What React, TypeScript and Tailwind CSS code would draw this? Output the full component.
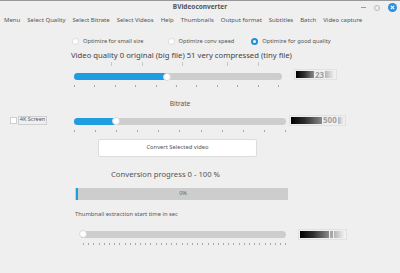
import React from "react";

const font = { fontFamily: '"Noto Sans", "DejaVu Sans", sans-serif' };

function Track({ width, fill, ticks, tickGap, tickStart = 0 }: { width: number; fill: number; ticks: number; tickGap: number; tickStart?: number }) {
  return (
    <div className="flex flex-col" style={{ width }}>
      <div className="relative h-[7px] rounded-full bg-[#cdcdcd]">
        <div className="h-full rounded-full bg-[#1f9de0]" style={{ width: fill }} />
        <div
          className="absolute top-1/2 h-[8px] w-[8px] -translate-y-1/2 -translate-x-1/2 rounded-full border border-[#d8d8d8] bg-white"
          style={{ left: fill }}
        />
      </div>
      <div className="mt-[5px] flex h-[3px]" style={{ paddingLeft: tickStart }}>
        {Array.from({ length: ticks }).map((_, i) => (
          <div key={i} className="h-[2px] w-[1px] shrink-0 bg-[#a8a8a8]" style={{ marginRight: i === ticks - 1 ? 0 : tickGap - 1 }} />
        ))}
      </div>
    </div>
  );
}

function ValueBox({ width, split, children }: { width: number; split: number; children?: React.ReactNode }) {
  return (
    <div className="flex h-[11px] items-center border border-[#e2e2e2] p-[1px]" style={{ width }}>
      <div
        className="h-full"
        style={{ width: split, background: "linear-gradient(to right, #000 0%, #2e2e2e 45%, #8a8a8a 100%)" }}
      />
      {children}
      <div className="h-full flex-1" style={{ background: "linear-gradient(to right, #b4b4b4 0%, #f4f4f4 100%)" }} />
    </div>
  );
}

function Radio({ checked, label }: { checked?: boolean; label: string }) {
  return (
    <div className="flex items-center gap-[4px]">
      {checked ? (
        <div className="flex h-[7px] w-[7px] items-center justify-center rounded-full bg-[#1e8fd8]">
          <div className="h-[3px] w-[3px] rounded-full bg-white" />
        </div>
      ) : (
        <div className="h-[7px] w-[7px] rounded-full border border-[#dcdcdc] bg-white" />
      )}
      <span className="whitespace-nowrap text-[5.7px] leading-none text-[#555]">{label}</span>
    </div>
  );
}

export default function App() {
  const menus = ["Menu", "Select Quality", "Select Bitrate", "Select Videos", "Help", "Thumbnails", "Output format", "Subtitles", "Batch", "Video capture"];
  return (
    <div className="flex h-[273px] w-[400px] flex-col overflow-hidden bg-[#efefef] text-[#444]" style={font}>
      {/* title bar */}
      <div className="grid h-[14px] grid-cols-[1fr_auto_1fr] items-center border-t border-[#9a9a9a]">
        <div />
        <div className="text-[6.5px] font-bold leading-none text-[#555]">BVideoconverter</div>
        <div className="flex items-center justify-end gap-[8px] pr-[3px]">
          <div className="h-[1px] w-[5px] bg-[#9a9a9a]" />
          <div className="h-[6px] w-[6px] rounded-full border border-[#b8b8b8]" />
          <div className="flex h-[9px] w-[9px] items-center justify-center rounded-full bg-[#2d8fe0]">
            <svg width="5" height="5" viewBox="0 0 5 5">
              <path d="M0.8 0.8 L4.2 4.2 M4.2 0.8 L0.8 4.2" stroke="white" strokeWidth="1.1" />
            </svg>
          </div>
        </div>
      </div>
      {/* menu bar */}
      <div className="flex h-[12px] items-center gap-[7px] pl-[4px] text-[6px] leading-none text-[#555]">
        {menus.map((m) => (
          <span key={m} className="whitespace-nowrap">{m}</span>
        ))}
      </div>
      {/* radios */}
      <div className="mt-[12px] flex h-[7px] items-center pl-[72px]">
        <Radio label="Optimize for small size" />
        <div className="ml-[24px]"><Radio label="Optimize conv speed" /></div>
        <div className="ml-[17px]"><Radio checked label="Optimize for good quality" /></div>
      </div>
      <div className="mt-[5px] whitespace-nowrap pl-[71px] text-[7.7px] leading-[11px] text-[#444]">
        Video quality 0 original (big file) 51 very compressed (tiny file)
      </div>
      {/* stray ticks */}
      <div className="mt-[1px] flex h-[4px] pl-[111px]">
        <div className="h-[4px] w-[1px] bg-[#c8c8c8]" />
        <div className="ml-[30px] h-[4px] w-[1px] bg-[#c8c8c8]" />
        <div className="ml-[39px] h-[4px] w-[1px] bg-[#c8c8c8]" />
        <div className="ml-[44px] h-[4px] w-[1px] bg-[#c8c8c8]" />
        <div className="ml-[30px] h-[4px] w-[1px] bg-[#c8c8c8]" />
      </div>
      {/* slider 1 */}
      <div className="mt-[3px] flex items-start pl-[74px]">
        <div className="mt-[4px]">
          <Track width={208} fill={93} ticks={11} tickGap={20.4} />
        </div>
        <div className="ml-[12px]">
          <ValueBox width={43} split={18}>
            <span className="px-[1px] text-[8px] font-bold leading-none text-[#a0a0a0]">23</span>
          </ValueBox>
        </div>
      </div>
      <div className="mt-[13px] pl-[74px]">
        <div className="w-[212px] text-center text-[6.5px] leading-none text-[#555]">Bitrate</div>
      </div>
      {/* row 2 */}
      <div className="mt-[7px] flex items-start pl-[10px]">
        <div className="mt-[2px] h-[7px] w-[7px] border border-[#cfcfcf] bg-white" />
        <div className="ml-[1px] mt-[1px] flex h-[9px] w-[29px] items-center justify-center whitespace-nowrap border border-[#cfcfcf] text-[5.5px] leading-none text-[#555]">
          4K Screen
        </div>
        <div className="ml-[27px] mt-[3px]">
          <Track width={212} fill={42} ticks={11} tickGap={21.1} />
        </div>
        <div className="ml-[3px]">
          <ValueBox width={57} split={31}>
            <span className="px-[1px] text-[8px] font-bold leading-none text-[#a0a0a0]">500</span>
          </ValueBox>
        </div>
      </div>
      {/* button */}
      <div className="mt-[6px] pl-[98px]">
        <div className="flex h-[18px] w-[159px] items-center justify-center rounded-[2px] border border-[#dcdcdc] bg-white text-[5.8px] leading-none text-[#555]">
          Convert Selected video
        </div>
      </div>
      <div className="mt-[12px] pl-[75px]">
        <div className="w-[181px] whitespace-nowrap text-center text-[7.7px] leading-[11px] text-[#555]">Conversion progress 0 - 100 %</div>
      </div>
      {/* progress */}
      <div className="mt-[8px] pl-[75px]">
        <div className="flex h-[12px] w-[213px] items-center bg-[#cdcdcd]">
          <div className="ml-[1px] h-full w-[2px] bg-[#1f9de0]" />
          <div className="flex-1 text-center text-[5.5px] leading-none text-[#666]">0%</div>
        </div>
      </div>
      <div className="mt-[10px] whitespace-nowrap pl-[75px] text-[5.8px] leading-[8px] text-[#555]">Thumbnail extraction start time in sec</div>
      {/* slider 3 */}
      <div className="mt-[11px] flex items-start pl-[81px]">
        <div className="mt-[2px]">
          <Track width={205} fill={2} ticks={40} tickGap={5.2} tickStart={2} />
        </div>
        <div className="ml-[12px]">
          <ValueBox width={49} split={29}>
            <div className="mx-[1px] h-full w-[3px] bg-[#a8a8a8]" />
          </ValueBox>
        </div>
      </div>
    </div>
  );
}
